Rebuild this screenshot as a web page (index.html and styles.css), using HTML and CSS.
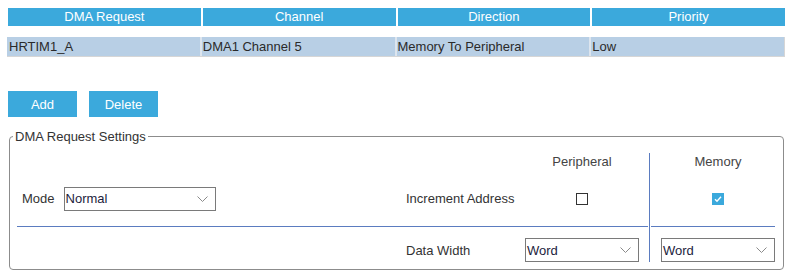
FILE: index.html
```html
<!DOCTYPE html>
<html lang="en">
<head>
    <meta charset="UTF-8">
    <title>DMA Settings</title>
    <link rel="stylesheet" href="styles.css">
</head>
<body>
    <div class="page">
        <div class="table-head">
            <div>DMA Request</div>
            <div>Channel</div>
            <div>Direction</div>
            <div>Priority</div>
        </div>
        <div class="table-row">
            <div>HRTIM1_A</div>
            <div>DMA1 Channel 5</div>
            <div>Memory To Peripheral</div>
            <div>Low</div>
        </div>

        <div class="buttons">
            <button class="btn" type="button">Add</button>
            <button class="btn" type="button">Delete</button>
        </div>

        <fieldset class="settings">
            <legend>DMA Request Settings</legend>
            <div class="settings-grid">
                <div class="col-title periph">Peripheral</div>
                <div class="col-title mem">Memory</div>

                <div class="mode">
                    <span class="label">Mode</span>
                    <div class="combo mode-combo">
                        <span>Normal</span>
                        <svg width="11" height="6" viewBox="0 0 11 6"><path d="M0.5 0.5 L5.5 5.5 L10.5 0.5" fill="none" stroke="#8a8a8a" stroke-width="1"/></svg>
                    </div>
                </div>
                <div class="label row-label inc">Increment Address</div>
                <div class="check-cell periph-inc"><span class="checkbox"></span></div>
                <div class="check-cell mem-inc">
                    <span class="checkbox checked">
                        <svg width="12" height="12" viewBox="0 0 12 12"><path d="M3 6.2 L5 8.2 L9 3.8" fill="none" stroke="#fff" stroke-width="1.4"/></svg>
                    </span>
                </div>

                <div class="divider"></div>

                <div class="label row-label width">Data Width</div>
                <div class="combo periph-width">
                    <span>Word</span>
                    <svg width="11" height="6" viewBox="0 0 11 6"><path d="M0.5 0.5 L5.5 5.5 L10.5 0.5" fill="none" stroke="#8a8a8a" stroke-width="1"/></svg>
                </div>
                <div class="combo mem-width">
                    <span>Word</span>
                    <svg width="11" height="6" viewBox="0 0 11 6"><path d="M0.5 0.5 L5.5 5.5 L10.5 0.5" fill="none" stroke="#8a8a8a" stroke-width="1"/></svg>
                </div>

                <div class="vline"></div>
            </div>
        </fieldset>
    </div>
</body>
</html>
```

FILE: styles.css
```css
body {
    margin: 0;
    background-color: white;
    font-family: "Liberation Sans", Arial, sans-serif;
    font-size: 13px;
    color: #333;
}
.page {
    padding: 8px;
    width: 777px;
}
.table-head,
.table-row {
    display: grid;
    grid-template-columns: repeat(4, 1fr);
    column-gap: 2px;
}
.table-head div {
    background-color: rgb(59, 169, 220);
    color: white;
    text-align: center;
    height: 18px;
    line-height: 18px;
}
.table-row {
    margin-top: 11px;
    background-color: rgb(221, 229, 238);
    border-bottom: 1px solid rgb(214, 214, 214);
    border-right: 1px solid rgb(214, 214, 214);
    margin-left: -1px;
}
.table-row div {
    background-color: rgb(184, 207, 229);
    height: 19px;
    line-height: 20px;
    padding-left: 1px;
    color: #2a2a2a;
}
.table-row div:first-child {
    padding-left: 2px;
}
.buttons {
    display: flex;
    gap: 12px;
    margin-top: 34px;
}
.btn {
    width: 69px;
    height: 26px;
    border: none;
    background-color: rgb(59, 169, 220);
    color: white;
    font-family: inherit;
    font-size: 13px;
    padding: 0;
    cursor: pointer;
}
.settings {
    margin: 12px 1px 0 1px;
    padding: 0 7px 7px 7px;
    border: 1px solid rgb(140, 140, 140);
    border-radius: 4px;
}
.settings legend {
    padding: 0 2px;
    margin-left: -4px;
    line-height: 15px;
    color: #333;
}
.settings-grid {
    display: grid;
    grid-template-columns: 389px 119px 114px 22px 114px;
    grid-template-rows: 18px 55px 1px 35px;
    margin-top: 9px;
}
.label {
    color: #333;
}
.col-title {
    grid-row: 1;
    text-align: center;
    line-height: 18px;
    color: #444;
}
.periph {
    grid-column: 3;
}
.mem {
    grid-column: 5;
}
.mode {
    grid-row: 2;
    grid-column: 1;
    display: flex;
    align-items: center;
    gap: 9px;
    padding-left: 5px;
}
.combo {
    display: flex;
    align-items: center;
    justify-content: space-between;
    height: 24px;
    box-sizing: border-box;
    border: 1px solid rgb(122, 122, 122);
    padding: 0 7px 0 1px;
    color: #1c1c3c;
    background-color: white;
}
.mode-combo {
    width: 152px;
}
.row-label {
    grid-column: 2;
    display: flex;
    align-items: center;
}
.inc {
    grid-row: 2;
}
.check-cell {
    grid-row: 2;
    display: flex;
    align-items: center;
    justify-content: center;
}
.periph-inc {
    grid-column: 3;
}
.mem-inc {
    grid-column: 5;
}
.checkbox {
    width: 12px;
    height: 12px;
    box-sizing: border-box;
    border: 1px solid #333;
    background-color: white;
    display: block;
}
.checkbox.checked {
    border: none;
    background-color: rgb(59, 169, 220);
}
.checkbox svg {
    display: block;
}
.divider {
    grid-row: 3;
    grid-column: 1 / -1;
    background-color: rgb(91, 124, 192);
}
.width {
    grid-row: 4;
    align-self: end;
    height: 24px;
}
.periph-width {
    grid-row: 4;
    grid-column: 3;
    align-self: end;
}
.mem-width {
    grid-row: 4;
    grid-column: 5;
    align-self: end;
}
.vline {
    grid-row: 1 / -1;
    grid-column: 4;
    width: 1px;
    margin-left: 9px;
    border-left: 1px solid white;
    border-right: 1px solid white;
    background-color: rgb(91, 124, 192);
}
```
